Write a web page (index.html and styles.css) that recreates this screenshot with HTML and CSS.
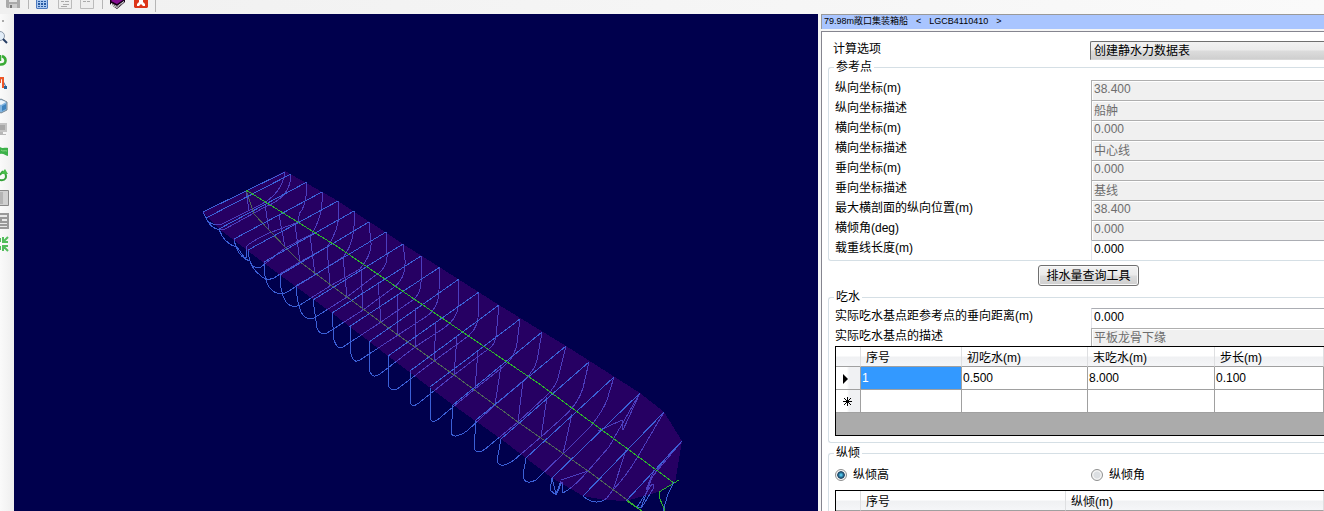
FILE: index.html
```html
<!DOCTYPE html>
<html lang="zh-CN">
<head>
<meta charset="utf-8">
<title>静水力计算</title>
<link rel="stylesheet" href="styles.css">
</head>
<body>
<div class="app">
<header class="toolbar">
  <button class="tool" aria-label="保存" disabled><svg width="14" height="9" viewBox="0 0 14 9"><path d="M0 0h14v8H1L0 7z" fill="#aaa"/><path d="M3 0h8v2H3z" fill="#e4e4e4"/><path d="M3 4h8v4H3z" fill="#ccc"/><path d="M4 5h2v3H4z" fill="#777"/></svg></button>
  <span class="split"></span>
  <button class="tool" aria-label="表格"><svg width="14" height="9" viewBox="0 0 14 9"><path d="M0 0h12v8l-1 1H1L0 8z" fill="#4c78bd"/><path d="M1 0h10v8H1z" fill="#a9c8f0"/><path d="M2 1h2v1H2zm3 0h2v1H5zm3 0h2v1H8zM2 3h2v2H2zm3 0h2v2H5zm3 0h2v2H8zM2 6h2v1H2zm3 0h2v1H5zm3 0h2v1H8z" fill="#285aa3"/></svg></button>
  <button class="tool" aria-label="报告" disabled><svg width="14" height="9" viewBox="0 0 14 9"><path d="M.5 0v8.500h13V0" fill="#eee" stroke="#bbb"/><path d="M3 1.500h3m1 0h4M5 4.500h6M3 6.500h6" stroke="#aaa"/></svg></button>
  <button class="tool" aria-label="文档" disabled><svg width="14" height="9" viewBox="0 0 14 9"><path d="M.5 0v8.500h13V0" fill="#eee" stroke="#bbb"/><path d="M3 1.500h3m1 0h3" stroke="#aaa"/></svg></button>
  <span class="split"></span>
  <button class="tool" aria-label="帮助"><svg width="16" height="9" viewBox="0 0 16 9"><path d="M0 0h15v2L7 9 0 4z" fill="#160018"/><path d="M2 0h11L7 4 1 1z" fill="#850b91"/><path d="m1 3 6 3 7-5v1L7 8 1 5z" fill="#fff"/><path d="m2 4 5 3 6-4" fill="none" stroke="#777"/></svg></button>
  <button class="tool" aria-label="关闭"><svg width="14" height="9" viewBox="0 0 14 9"><path d="M0 0h14v7l-1 1H1L0 7z" fill="#dd3518"/><path d="M5 0h4v2l2 2v2H9L7 4 5 6H3V4l2-2z" fill="#fff"/></svg></button>
  <span class="split split-end"></span>
</header>
<div class="work">
<nav class="sidebar" aria-label="视图工具">
  <span class="grip"></span>
  <button class="side" aria-label="缩放"><svg width="10" height="16" viewBox="0 0 10 16"><circle cx="0" cy="7" r="4.500" fill="#e2edf8" stroke="#8d9aaa"/><path d="m3 10 4 4" stroke="#243c63" stroke-width="2"/></svg></button>
  <button class="side" aria-label="旋转"><svg width="10" height="16" viewBox="0 0 10 16"><path d="M0 12.500C7 13 7 6 2 4M0 9V3" fill="none" stroke="#39aa35" stroke-width="2.500"/></svg></button>
  <button class="side" aria-label="节点"><svg width="10" height="16" viewBox="0 0 10 16"><path d="m2 4 4 8" stroke="#336ba7"/><path d="M0 8V2m0 1h3v10" fill="none" stroke="#ed5728" stroke-width="2"/><path d="M4 11h3v3H4z" fill="#286599"/></svg></button>
  <button class="side" aria-label="三维"><svg width="10" height="16" viewBox="0 0 10 16"><path d="m-5 4 6-3 6 3v8l-6 3-6-3z" fill="#80b4e0" stroke="#778794"/><path d="m-4 4 5-2 5 2-5 3z" fill="#edf5fb"/><path d="m2 8 4-2v5l-4 2z" fill="#3d83bf"/></svg></button>
  <button class="side" aria-label="显示" disabled><svg width="10" height="16" viewBox="0 0 10 16"><path d="M0 2h7v9H0z" fill="#c4c4c4"/><path d="M0 4h5v5H0z" fill="#a8a8a8"/><path d="M0 11h3v2h3v1H0z" fill="#b8b8b8"/></svg></button>
  <button class="side" aria-label="曲面"><svg width="10" height="16" viewBox="0 0 10 16"><path d="M0 3c3 2 5 0 8 1v8c-3 0-4-3-8-2z" fill="#3db14a"/><path d="M1 6c2 2 4 0 6 1" fill="none" stroke="#8bd886"/></svg></button>
  <button class="side" aria-label="刷新"><svg width="10" height="16" viewBox="0 0 10 16"><path d="M0 13c6 1 7-3 5-7M0 8l3-4" fill="none" stroke="#36a23a" stroke-width="2"/><path d="m1 7 4-5 3 5z" fill="#49bc4a"/></svg></button>
  <button class="side" aria-label="渐变"><svg width="10" height="16" viewBox="0 0 10 16"><path d="M-1 .5h9.500v15H-1" fill="#d0d0d0" stroke="#888"/><path d="M0 2h3v12H0z" fill="#b4b4b4"/></svg></button>
  <button class="side" aria-label="列表"><svg width="10" height="16" viewBox="0 0 10 16"><path d="M0 0h9v16H0z" fill="#999"/><path d="M0 2h7v2H0zm2 4h5v2H2zm-2 4h7v1H0zm0 3h7v1H0z" fill="#e8e8e8"/></svg></button>
  <button class="side" aria-label="全屏"><svg width="10" height="16" viewBox="0 0 10 16"><path d="M3 1v5h5M8 1 3 6M3 15v-5h5M8 15l-5-5M0 2v4m0 4v4" fill="none" stroke="#52bd5b" stroke-width="2"/></svg></button>
</nav>
<main class="canvas">
<svg class="hull" viewBox="14 14 804 497" preserveAspectRatio="xMinYMin slice" role="img" aria-label="船体线框">
  <g class="section">
    <path d="M203 212 207 220Q211 226 222 224L260 205Q282 194 285 172"/>
    <path d="M206 218Q212 232 225 229L265 207Q291 197 291 174"/>
    <path d="M219 229Q224 244 237 247L244 257H246V247Q250 242 269 233L299 222Q298 213 302 210 307 200 307 182"/>
    <path d="M234 239Q237 257 250 261 252 269 261 267L285 248 312 234Q324 213 322 192"/>
    <path d="M248 250Q249 267 260 275 268 284 280 274L300 262 327 247Q342 227 338 201"/>
    <path d="M264 262Q264 282 270 288 279 299 292 289L315 275 343 257Q356 242 354 211"/>
    <path d="M280 275Q280 293 286 302 292 309 300 305L330 286 360 269Q372 254 371 243L369 222"/>
    <path d="M296 286Q297 303 301 312 306 321 314 318L347 297 373 277Q388 269 387 254L386 232"/>
    <path d="M313 300 317 328Q320 336 327 333L363 310 393 288Q406 279 405 260L403 244"/>
    <path d="M332 313 334 340Q337 350 343 347L381 322 410 302Q421 296 421 282V256"/>
    <path d="M350 327 351 354Q353 364 360 360L398 335 427 316Q439 307 439 290L440 267"/>
    <path d="M369 342 370 372Q373 379 380 374L415 347 444 328Q457 319 458 307L459 279"/>
    <path d="M388 356 389 387Q393 393 400 387L434 361 463 340Q477 331 478 318L479 292"/>
    <path d="M410 371V402Q412 409 420 402L454 375 484 352Q495 347 496 336L499 305"/>
    <path d="M430 387 431 420Q434 424 442 416L475 389 504 366Q515 357 517 343L520 319"/>
    <path d="M453 405 451 433Q453 440 467 431L495 405 523 381Q537 369 538 355L542 332"/>
    <path d="M476 420 474 448Q477 457 490 445L518 422 546 396Q557 386 559 374L566 346"/>
    <path d="M501 439 497 461Q500 470 514 460L541 437 560 420Q578 405 583 388L589 362"/>
    <path d="M526 458 523 475Q524 486 536 480L563 454 590 427Q603 411 607 400L614 377"/>
    <path d="M552 478 550 490 556 495 562 482V493Q570 491 588 471L609 447Q618 431 640 393L623 430 622 420 598 431M561 480 588 471M552 478 556 494 561 481"/>
    <path d="M583 496Q595 507 607 498L613 490Q627 475 637 458L664 412"/>
    <path d="M626 501 682 441 652 477 641 508 637 507 652 484H653V489L642 507M682 441Q656 466 646 490"/>
    <path d="M246 190 249 211M265 205 269 230M279 215 285 247M295 224 300 262M310 235 315 275M327 247 330 286M343 257 347 297M361 269 363 310M378 282 381 322M397 295 398 335M416 308 415 347M436 322 434 361M457 336 454 375M478 350 475 389M501 366 495 405M523 381 518 422M547 397 541 437M572 414 563 454M626 450 613 490M654 470 646 490"/>
  </g>
  <path class="keel" d="M246 190 254 214 285 247 300 262 347 297 398 335 454 375 518 422 588 471 642 511"/>
  <path class="deck" d="M203 212 285 171 338 201 403 244 499 305 566 346 640 393 664 412 682 441 675 483 658 492 626 501 605 500 583 496 552 478 501 439 453 405 388 356 332 313 280 275 219 229z"/>
  <path class="beam" d="M203 212 285 172M206 218 291 174M219 229 307 182M234 239 322 192M248 250 338 201M264 262 354 211M280 275 369 222M296 286 386 232M313 300 403 244M332 313 421 256M349 327 440 267M369 342 459 279M388 356 479 292M410 371 499 305M430 387 520 319M453 405 542 332M476 420 566 346M501 439 589 362M526 458 614 377M552 478 640 393M583 496 664 412M626 501 682 441"/>
  <path class="axis" d="M246 190 338 247 439 316 538 383 674 483M679 480 659 492V497L664 508 665 511M627 501 642 511"/>
  <path class="beam" d="M674 482 668 494 663 511"/>
</svg>
</main>
<aside class="panel">
  <h1 class="title"><span>79.98m敞口集装箱船</span><span>&lt;</span><span>LGCB4110410</span><span>&gt;</span></h1>
  <form class="form">
    <div class="row option">
      <label for="calc">计算选项</label>
      <select id="calc" class="combo"><option>创建静水力数据表</option></select>
    </div>
    <fieldset class="group reference">
      <legend>参考点</legend>
      <div class="row"><label for="r1">纵向坐标(m)</label><input id="r1" value="38.400" disabled></div>
      <div class="row"><label for="r2">纵向坐标描述</label><input id="r2" value="船舯" disabled></div>
      <div class="row"><label for="r3">横向坐标(m)</label><input id="r3" value="0.000" disabled></div>
      <div class="row"><label for="r4">横向坐标描述</label><input id="r4" value="中心线" disabled></div>
      <div class="row"><label for="r5">垂向坐标(m)</label><input id="r5" value="0.000" disabled></div>
      <div class="row"><label for="r6">垂向坐标描述</label><input id="r6" value="基线" disabled></div>
      <div class="row"><label for="r7">最大横剖面的纵向位置(m)</label><input id="r7" value="38.400" disabled></div>
      <div class="row"><label for="r8">横倾角(deg)</label><input id="r8" value="0.000" disabled></div>
      <div class="row"><label for="r9">载重线长度(m)</label><input id="r9" value="0.000"></div>
    </fieldset>
    <button type="button" class="query">排水量查询工具</button>
    <fieldset class="group draft">
      <legend>吃水</legend>
      <div class="row"><label for="d1">实际吃水基点距参考点的垂向距离(m)</label><input id="d1" value="0.000"></div>
      <div class="row"><label for="d2">实际吃水基点的描述</label><input id="d2" value="平板龙骨下缘" disabled></div>
      <div class="grid">
        <table>
          <colgroup><col class="c-mark"><col class="c-no"><col class="c-from"><col class="c-to"><col></colgroup>
          <thead><tr><th></th><th>序号</th><th>初吃水(m)</th><th>末吃水(m)</th><th>步长(m)</th></tr></thead>
          <tbody>
            <tr><th scope="row"><svg width="6" height="10" viewBox="0 0 6 10"><path d="m0 0 5 5-5 5z"/></svg></th><td class="selected">1</td><td>0.500</td><td>8.000</td><td>0.100</td></tr>
            <tr><th scope="row"><svg width="9" height="9" viewBox="0 0 9 9"><path d="M4.500 0v9M0 4.500h9M1 1l7 7M8 1 1 8" stroke="#000"/></svg></th><td></td><td></td><td></td><td></td></tr>
          </tbody>
        </table>
      </div>
    </fieldset>
    <fieldset class="group trim">
      <legend>纵倾</legend>
      <div class="row radios">
        <label><input type="radio" name="trim" checked>纵倾高</label>
        <label><input type="radio" name="trim">纵倾角</label>
      </div>
      <div class="grid">
        <table>
          <colgroup><col class="c-mark"><col class="c-trim"><col></colgroup>
          <thead><tr><th></th><th>序号</th><th>纵倾(m)</th></tr></thead>
        </table>
      </div>
    </fieldset>
  </form>
</aside>
</div>
</div>
</body>
</html>
```

FILE: styles.css
```css
* { box-sizing: border-box; }
body {
  margin: 0;
  background: #f5f5f5;
  color: #000;
  font: 12px/15px "Liberation Sans", "Noto Sans CJK SC", sans-serif;
}
button, input, select { font: inherit; color: inherit; margin: 0; }
.app { display: flex; flex-direction: column; height: 100vh; overflow: hidden; }

.toolbar {
  display: flex;
  align-items: flex-start;
  gap: 8px;
  height: 14px;
  flex: none;
  padding-left: 6px;
  background: linear-gradient(90deg, #f0f0f0, #fafafa);
}
.tool, .side { display: block; padding: 0; border: 0; background: none; }
.tool svg, .side svg { display: block; }
.split { width: 1px; height: 9px; margin-right: -1px; background: #b5b5b5; }
.split-end { height: 12px; margin-left: -1px; }

.work { display: flex; flex: 1; min-height: 0; }
.sidebar {
  display: flex;
  flex-direction: column;
  flex: none;
  gap: 7px;
  width: 14px;
  background: linear-gradient(90deg, #fafafa, #eee);
}
.grip { width: 2px; height: 2px; margin: 6px 0 0 2px; background: #aaa; }
.canvas { flex: 804 1 0; min-width: 0; background: #00004d; }
.hull { display: block; width: 100%; height: 100%; fill: none; shape-rendering: crispEdges; }
.section { stroke: #3b5fd6; }
.keel { stroke: #3d9a3d; }
.deck { fill: #700091; fill-opacity: .34; }
.beam { stroke: #3b62d8; }
.axis { stroke: #2db52d; }

.panel {
  display: flex;
  flex-direction: column;
  flex: 503 1 0;
  min-width: 0;
  margin-left: 3px;
}
.title {
  display: flex;
  gap: 8px;
  flex: none;
  height: 15px;
  margin: 0 0 2px;
  padding-left: 2px;
  border: solid #999;
  border-width: 1px 0 0 1px;
  background: #a9c5ff;
  font-size: 9px;
  font-weight: 400;
  line-height: 12px;
}
.form {
  flex: 1;
  min-height: 0;
  padding: 9px 0 0 6px;
  border: solid #85858f;
  border-width: 1px 0 0 1px;
  background: #fff;
  overflow: hidden;
}
.row { display: grid; grid-template-columns: 256px 1fr; height: 20px; padding-left: 6px; }
.row label { padding-top: 1px; white-space: nowrap; }
.option { padding-left: 5px; grid-template-columns: 257px 1fr; }
.combo {
  appearance: none;
  height: 19px;
  padding: 2px 3px 0;
  border: 1px solid #707070;
  border-right: 0;
  border-bottom-color: #d8d8d8;
  border-radius: 2px 0 0 0;
  background: linear-gradient(#f2f2f2, #ebebeb 48%, #dcdcdc 52%, #cfcfcf);
}
.row input:not([type]) {
  width: 100%;
  min-width: 0;
  height: 100%;
  padding: 0 2px 3px;
  border: 1px solid #e2e3ea;
  border-width: 1px 0 0 1px;
  border-top-color: #abadb3;
  background: #fff;
}
.row input:disabled:not([type]) {
  border-color: #afafaf;
  background: #f0f0f0;
  box-shadow: inset 1px 1px #fff;
  color: #6d6d6d;
}
.group {
  min-width: 0;
  margin: 0;
  padding: 0;
  border: 1px solid #d5dfe5;
  border-right: 0;
  border-radius: 3px 0 0 3px;
}
.group legend { height: 12px; margin-left: 5px; padding: 0 2px; line-height: 12px; }
.reference { padding-top: 7px; }
.query {
  display: block;
  width: 101px;
  height: 21px;
  margin: 4px 0 5px 210px;
  padding: 2px 0 0;
  border: 1px solid #707070;
  border-radius: 3px;
  background: linear-gradient(#f2f2f2, #ebebeb 48%, #dcdcdc 52%, #cfcfcf);
  box-shadow: inset 0 0 0 1px #f8f8f8;
  line-height: 17px;
}
.draft { padding: 4px 0 6px; margin-bottom: 4px; }
.draft .row { height: 21px; padding-top: 1px; }
.draft .row:nth-of-type(2) { height: 18px; padding-top: 0; }
.grid {
  height: 90px;
  margin-left: 6px;
  border: 1px solid #000;
  border-right: 0;
  background: #ababab;
  overflow: hidden;
}
table { width: 100%; table-layout: fixed; border-collapse: separate; border-spacing: 0; background: #fff; }
.c-mark { width: 25px; }
.c-no { width: 101px; }
.c-from { width: 126px; }
.c-to { width: 127px; }
.c-trim { width: 205px; }
td, th { height: 23px; padding: 1px 1px 0; border: solid #a0a0a0; border-width: 0 1px 1px 0; text-align: left; font-weight: 400; line-height: 15px; }
thead th { height: 20px; padding: 3px 5px 0; border-right-color: #dedfe1; background: linear-gradient(#fff, #fff 45%, #f0f1f3 55%, #f5f6f8); }
tbody th { padding-left: 7px; background: linear-gradient(90deg, #fff 45%, #f0f1f3 55%); }
tbody th svg { display: block; }
.selected { background: #3399ff; color: #fff; }
.trim .radios { align-items: center; height: 31px; }
.radios label { display: flex; align-items: center; gap: 6px; }
.radios input {
  appearance: none;
  width: 12px;
  height: 12px;
  border: 1px solid #8e8f8f;
  border-radius: 50%;
  background: radial-gradient(circle, #dcdfe2 45%, #f4f4f4 55%);
}
.radios input:checked { background: radial-gradient(circle, #4fc0e6 10%, #123a5c 48%, #f4f4f4 58%); }
```
